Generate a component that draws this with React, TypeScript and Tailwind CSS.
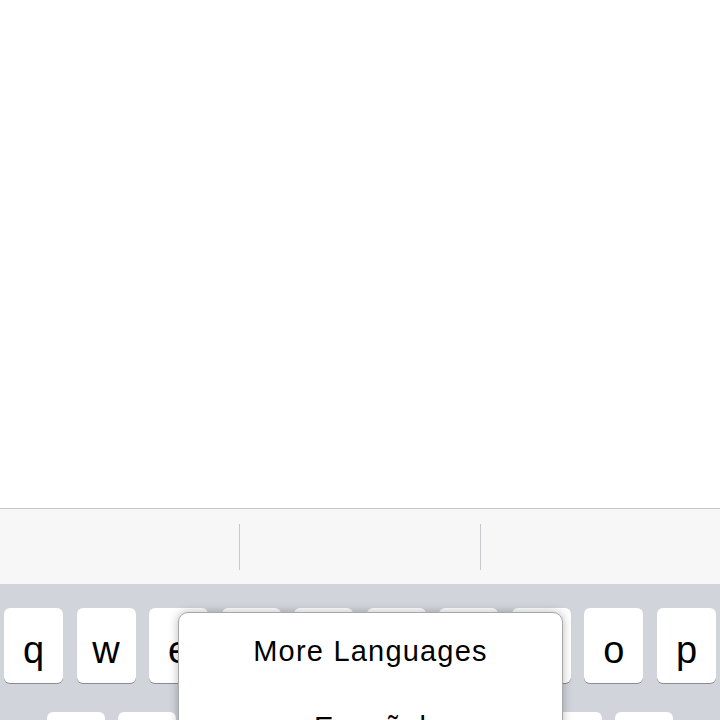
import React from "react"

const topRow = ["q", "w", "e", "r", "t", "y", "u", "i", "o", "p"]
const homeRow = ["a", "s", "d", "f", "g", "h", "j", "k", "l"]

function Key({ label }: { label: string }) {
  return (
    <div className="flex-1 h-[75px] bg-white rounded-[6px] shadow-[0_1px_0_#8b8c8f] flex items-center justify-center pt-[8px] text-[38px] leading-none text-black">
      {label}
    </div>
  )
}

export default function App() {
  return (
    <div
      className="w-[720px] h-[720px] overflow-hidden flex flex-col bg-white"
      style={{ fontFamily: '"Liberation Sans", Arial, sans-serif' }}
    >
      {/* text area */}
      <div className="h-[508px] shrink-0 bg-white" />

      {/* suggestion bar */}
      <div className="h-[76px] shrink-0 border-t border-[#c8c8cc] bg-[#f7f7f7] flex items-center">
        <div className="flex-1 h-[46px]" />
        <div className="w-px h-[46px] bg-[#c9c9cd]" />
        <div className="flex-1 h-[46px]" />
        <div className="w-px h-[46px] bg-[#c9c9cd]" />
        <div className="flex-1 h-[46px]" />
      </div>

      {/* keyboard */}
      <div className="relative flex-1 bg-[#d1d5db] pt-[24px]">
        <div className="flex gap-[13.5px] px-[4px]">
          {topRow.map(k => <Key key={k} label={k} />)}
        </div>
        <div className="flex gap-[13px] px-[47px] mt-[29px]">
          {homeRow.map(k => <Key key={k} label={k} />)}
        </div>

        {/* language menu */}
        <div className="absolute left-[178px] top-[28px] w-[385px] h-[200px] bg-white rounded-[10px] border border-[#a7a8ab] shadow-[0_0_10px_rgba(0,0,0,0.28)]">
          <div className="h-[76px] flex items-center justify-center text-[29px] leading-none tracking-[1.2px] text-black">
            More Languages
          </div>
          <div className="h-[76px] flex items-center justify-center text-[29px] leading-none tracking-[1.2px] text-black">
            Español
          </div>
        </div>
      </div>
    </div>
  )
}
